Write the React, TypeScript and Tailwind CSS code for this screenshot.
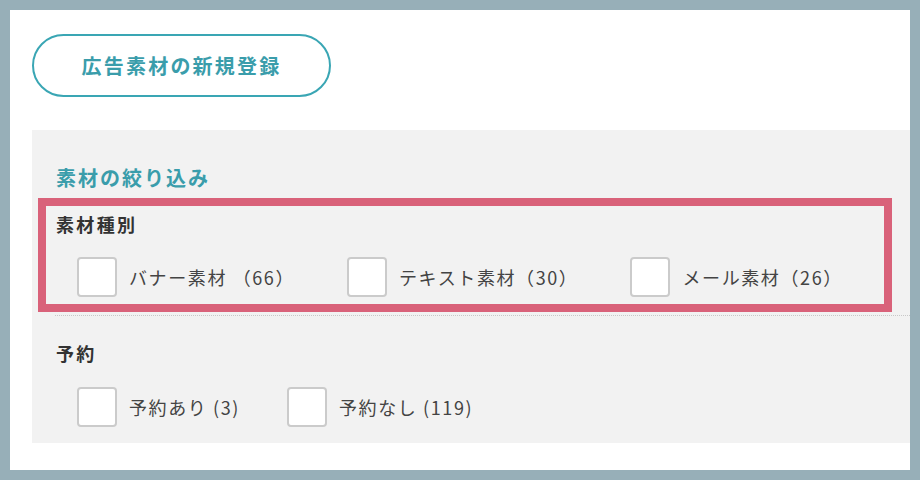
const font = { fontFamily: '"Noto Sans CJK JP", "Noto Sans", sans-serif' };

function Check({ label }: { label: string }) {
  return (
    <label className="flex items-center gap-3">
      <span className="h-10 w-10 rounded-[4px] border-2 border-[#cbcbcb] bg-white" />
      <span className="text-[18px] leading-6 tracking-[1.6px] text-[#444]">{label}</span>
    </label>
  );
}

export default function App() {
  return (
    <div className="h-[480px] w-[920px] bg-[#97afb8] p-[10px]" style={font}>
      <div className="flex h-full flex-col bg-white pt-6">
        <button
          type="button"
          className="ml-[22px] flex h-[63px] w-[299px] items-center justify-center rounded-full border-2 border-[#3aa6b4] text-[20px] font-bold tracking-[0.11em] text-[#3a9dab]"
        >
          広告素材の新規登録
        </button>

        <div className="relative ml-[22px] mt-[33px] bg-[#f2f2f2] pb-4 pt-[35px]">
          <h2 className="pl-6 text-[20px] font-bold leading-[26px] tracking-[0.1em] text-[#3a9dab]">素材の絞り込み</h2>

          <div className="mt-[21px] pl-6">
            <h3 className="text-[18px] font-bold leading-6 tracking-[0.13em] text-[#333]">素材種別</h3>
            <div className="ml-[21px] mt-[21px] flex gap-[52px]">
              <Check label="バナー素材 （66）" />
              <Check label="テキスト素材（30）" />
              <Check label="メール素材（26）" />
            </div>
          </div>

          <div className="ml-[23px] mt-[18px] border-t border-dotted border-[#c8c8c8]" />

          <div className="mt-[25px] pl-6">
            <h3 className="text-[18px] font-bold leading-6 tracking-[0.13em] text-[#333]">予約</h3>
            <div className="ml-[21px] mt-[22px] flex gap-[47px]">
              <Check label="予約あり (3)" />
              <Check label="予約なし (119)" />
            </div>
          </div>

          {/* highlight annotation */}
          <div className="pointer-events-none absolute left-[6px] top-[68px] h-[114px] w-[854px] border-[8px] border-[#d9627a]" />
        </div>
      </div>
    </div>
  );
}
